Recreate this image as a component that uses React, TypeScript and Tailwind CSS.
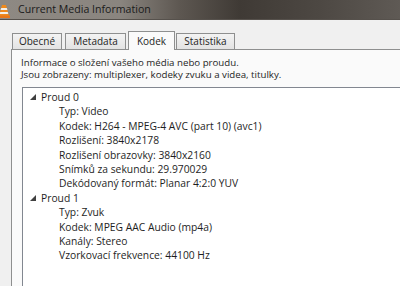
import React from 'react';

const font = { fontFamily: '"Open Sans", "Noto Sans", sans-serif' };

const streams = [
  {
    name: 'Proud 0',
    items: [
      'Typ: Video',
      'Kodek: H264 - MPEG-4 AVC (part 10) (avc1)',
      'Rozlišení: 3840x2178',
      'Rozlišení obrazovky: 3840x2160',
      'Snímků za sekundu: 29.970029',
      'Dekódovaný formát: Planar 4:2:0 YUV',
    ],
  },
  {
    name: 'Proud 1',
    items: [
      'Typ: Zvuk',
      'Kodek: MPEG AAC Audio (mp4a)',
      'Kanály: Stereo',
      'Vzorkovací frekvence: 44100 Hz',
    ],
  },
];

const VlcIcon = () => (
  <svg width="12" height="14" viewBox="0 0 12 14">
    <path d="M4 1 L8 1 L11 12 L1 12 Z" fill="#f08a1c" />
    <path d="M3.2 4 L8.8 4 L9.4 6 L2.6 6 Z" fill="#f4f0ea" />
    <path d="M2.2 8 L9.8 8 L10.3 10 L1.7 10 Z" fill="#f4f0ea" />
    <rect x="0" y="11.5" width="12" height="2.5" fill="#e8781a" />
  </svg>
);

const tabBase =
  'h-[16px] flex items-center justify-center bg-[linear-gradient(#f3f3f3,#e3e3e3)] border border-b-0 border-[#8e8f8f]';

export default function App() {
  return (
    <div className="w-[400px] h-[286px] overflow-hidden bg-[#f0f0f0] text-[#1e1e1e]" style={font}>
      {/* Title bar */}
      <div className="h-[20px] flex items-center gap-[8px] bg-[linear-gradient(90deg,#8e8983_0%,#8a857f_30%,#5d5751_45%,#3f3a35_60%,#4d4843_80%,#5f5a55_100%)] border-b border-[#56514c]">
        <div className="-ml-[2px] mt-[2px]">
          <VlcIcon />
        </div>
        <span className="text-[10.6px] text-[#1a1a1a] leading-none">Current Media Information</span>
      </div>

      <div className="pl-[11px] pt-[11px]">
        {/* Tabs */}
        <div className="flex items-end h-[18px] text-[10px]">
          <div className={`${tabBase} ml-[1px] w-[50px]`}>Obecné</div>
          <div className={`${tabBase} ml-[3px] w-[61px]`}>Metadata</div>
          <div className="h-[19px] -mb-px ml-[2px] w-[47px] z-10 flex items-center justify-center bg-[#fafafa] border border-b-0 border-[#8e8f8f]">
            Kodek
          </div>
          <div className={`${tabBase} ml-[1px] w-[59px]`}>Statistika</div>
        </div>

        {/* Tab panel */}
        <div className="h-[250px] bg-[#fafafa] border-l border-t border-[#8e8f8f] pl-[9px] pt-[7px]">
          <div className="text-[9.7px] leading-[12px]">
            <div>Informace o složení vašeho média nebo proudu.</div>
            <div>Jsou zobrazeny: multiplexer, kodeky zvuku a videa, titulky.</div>
          </div>

          <div className="mt-[6px] ml-[1px] h-[200px] bg-white border-l border-t border-[#828790] pt-[2px] text-[10.3px]">
            {streams.map((s) => (
              <div key={s.name}>
                <div className="h-[14.4px] flex items-center leading-none">
                  <svg width="6" height="6" viewBox="0 0 6 6" className="ml-[7px] mr-[5px]">
                    <path d="M6 0 L6 6 L0 6 Z" fill="#404040" />
                  </svg>
                  <span>{s.name}</span>
                </div>
                {s.items.map((it) => (
                  <div key={it} className="h-[14.4px] flex items-center pl-[36px] leading-none whitespace-nowrap">
                    {it}
                  </div>
                ))}
              </div>
            ))}
          </div>
        </div>
      </div>
    </div>
  );
}
